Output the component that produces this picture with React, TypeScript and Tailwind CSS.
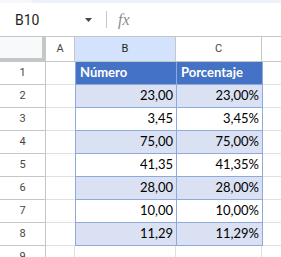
import React from "react";

const rows: { n: number; b: string; c: string }[] = [
  { n: 2, b: "23,00", c: "23,00%" },
  { n: 3, b: "3,45", c: "3,45%" },
  { n: 4, b: "75,00", c: "75,00%" },
  { n: 5, b: "41,35", c: "41,35%" },
  { n: 6, b: "28,00", c: "28,00%" },
  { n: 7, b: "10,00", c: "10,00%" },
  { n: 8, b: "11,29", c: "11,29%" },
];

const ui = { fontFamily: "Roboto, 'Liberation Sans', sans-serif" };
const cal = { fontFamily: "Lato, 'Liberation Sans', sans-serif" };

export default function App() {
  return (
    <div className="w-[281px] h-[257px] overflow-hidden bg-white flex flex-col" style={ui}>
      {/* top strip */}
      <div className="h-[3px] flex shrink-0">
        <div className="w-[31px] bg-[#f6f8fc]" />
        <div className="flex-1 bg-[#edf2fa] rounded-bl-[4px]" />
      </div>
      {/* formula bar */}
      <div className="h-[34px] shrink-0 flex items-center border-b border-[#c4c7c5] bg-white">
        <div className="w-[106px] flex items-center pl-[15px] pr-[14px]">
          <span className="text-[14px] text-[#1f1f1f] leading-none flex-1">B10</span>
          <svg width="7" height="4" viewBox="0 0 7 4" className="mt-[1px]">
            <path d="M0 0 L7 0 L3.5 4 Z" fill="#444746" />
          </svg>
        </div>
        <div className="w-px h-[17px] bg-[#c4c7c5]" />
        <span
          className="ml-[11px] text-[16px] italic text-[#8a8d91] leading-none"
          style={{ fontFamily: "'Liberation Serif', serif" }}
        >
          fx
        </span>
      </div>
      {/* column header */}
      <div className="h-[25px] shrink-0 flex">
        <div className="w-[46px] bg-[#f8f9fa] border-r-[4px] border-b-[4px] border-[#c4c7c5]" />
        <div className="w-[29px] border-r border-b border-[#c4c7c5] flex items-center justify-center text-[11px] text-[#444746]">
          A
        </div>
        <div className="w-[101px] bg-[#d3e3fd] border-r border-b border-[#c4c7c5] flex items-center justify-center text-[11px] text-[#1f1f1f]">
          B
        </div>
        <div className="w-[86px] border-r border-b border-[#c4c7c5] flex items-center justify-center text-[11px] text-[#444746]">
          C
        </div>
        <div className="flex-1 border-b border-[#c4c7c5]" />
      </div>
      {/* row 1 */}
      <div className="h-[23px] shrink-0 flex">
        <div className="w-[46px] border-r border-b border-[#c4c7c5] flex items-center justify-center text-[11px] text-[#444746]">
          1
        </div>
        <div className="w-[29px] border-b border-[#e1e1e1]" />
        <div
          className="w-[102px] bg-[#4472c4] border-l border-r border-b border-[#8ea9db] flex items-end pl-[4px] pb-[5px] text-[13px] font-bold text-white leading-none"
          style={cal}
        >
          Número
        </div>
        <div
          className="w-[86px] bg-[#4472c4] border-r border-b border-[#8ea9db] flex items-end pl-[4px] pb-[5px] text-[13px] font-bold text-white leading-none"
          style={cal}
        >
          Porcentaje
        </div>
        <div className="flex-1 border-b border-[#e1e1e1]" />
      </div>
      {rows.map((r) => {
        const bg = r.n % 2 === 0 ? "bg-[#d9e1f2]" : "bg-white";
        return (
          <div key={r.n} className="h-[23px] shrink-0 flex">
            <div className="w-[46px] border-r border-b border-[#c4c7c5] flex items-center justify-center text-[11px] text-[#444746]">
              {r.n}
            </div>
            <div className="w-[29px] border-b border-[#e1e1e1]" />
            <div
              className={`w-[102px] ${bg} border-l border-r border-b border-[#8ea9db] flex items-end justify-end pr-[3px] pb-[5px] text-[13px] text-black leading-none`}
              style={cal}
            >
              {r.b}
            </div>
            <div
              className={`w-[86px] ${bg} border-r border-b border-[#8ea9db] flex items-end justify-end pr-[3px] pb-[5px] text-[13px] text-black leading-none`}
              style={cal}
            >
              {r.c}
            </div>
            <div className="flex-1 border-b border-[#e1e1e1]" />
          </div>
        );
      })}
      {/* row 9 */}
      <div className="h-[23px] shrink-0 flex">
        <div className="w-[46px] border-r border-b border-[#c4c7c5] flex items-center justify-center text-[11px] text-[#444746]">
          9
        </div>
        <div className="w-[29px] border-r border-b border-[#e1e1e1]" />
        <div className="w-[101px] border-r border-b border-[#e1e1e1]" />
        <div className="w-[86px] border-r border-b border-[#e1e1e1]" />
        <div className="flex-1 border-b border-[#e1e1e1]" />
      </div>
    </div>
  );
}
